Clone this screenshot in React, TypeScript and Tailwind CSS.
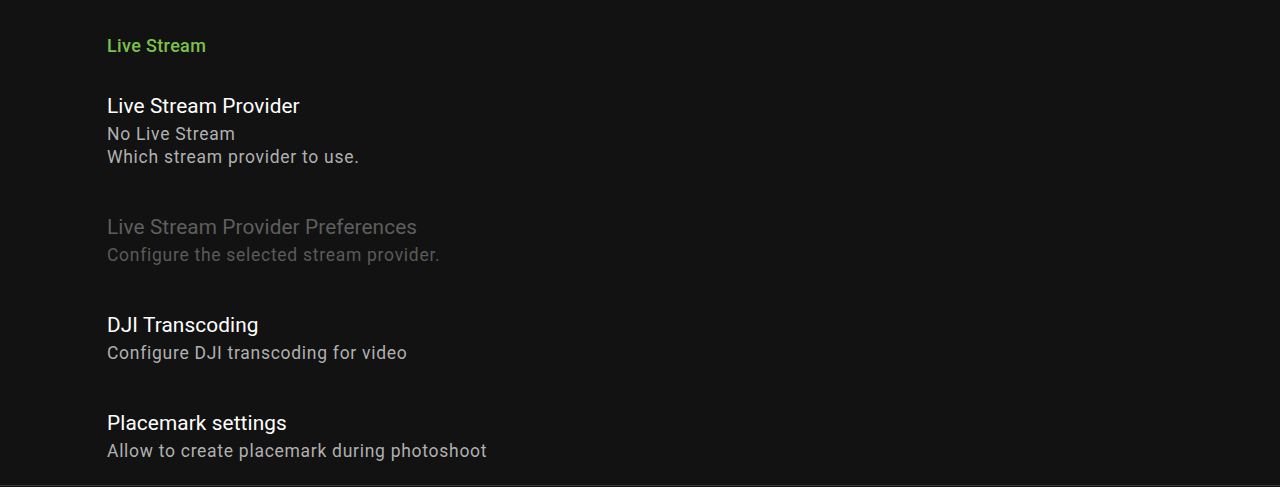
const prefs = [
  { title: "Live Stream Provider", summary: ["No Live Stream", "Which stream provider to use."], enabled: true },
  { title: "Live Stream Provider Preferences", summary: ["Configure the selected stream provider."], enabled: false },
  { title: "DJI Transcoding", summary: ["Configure DJI transcoding for video"], enabled: true },
  { title: "Placemark settings", summary: ["Allow to create placemark during photoshoot"], enabled: true },
];

export default function App() {
  return (
    <div className="h-[487px] w-full bg-[#121212] font-['Roboto',sans-serif] overflow-hidden">
      <div className="border-b border-[#3a3a3a]">
        <div className="pl-[107px] pt-[34px] pb-[12px]">
          <h2 className="text-[18px] leading-[24px] font-medium tracking-[0.35px] text-[#7cc04b]">Live Stream</h2>
        </div>
        {prefs.map(pref => (
          <div key={pref.title} className="pl-[107px] py-[22px]">
            <div className={`text-[20.8px] leading-[28px] tracking-[0.1px] ${pref.enabled ? "text-white" : "text-[#5e5e5e]"}`}>
              {pref.title}
            </div>
            <div className={`mt-[3px] text-[17.5px] leading-[23px] tracking-[0.72px] ${pref.enabled ? "text-[#b0b0b0]" : "text-[#5a5a5a]"}`}>
              {pref.summary.map(line => (
                <p key={line}>{line}</p>
              ))}
            </div>
          </div>
        ))}
      </div>
    </div>
  );
}
